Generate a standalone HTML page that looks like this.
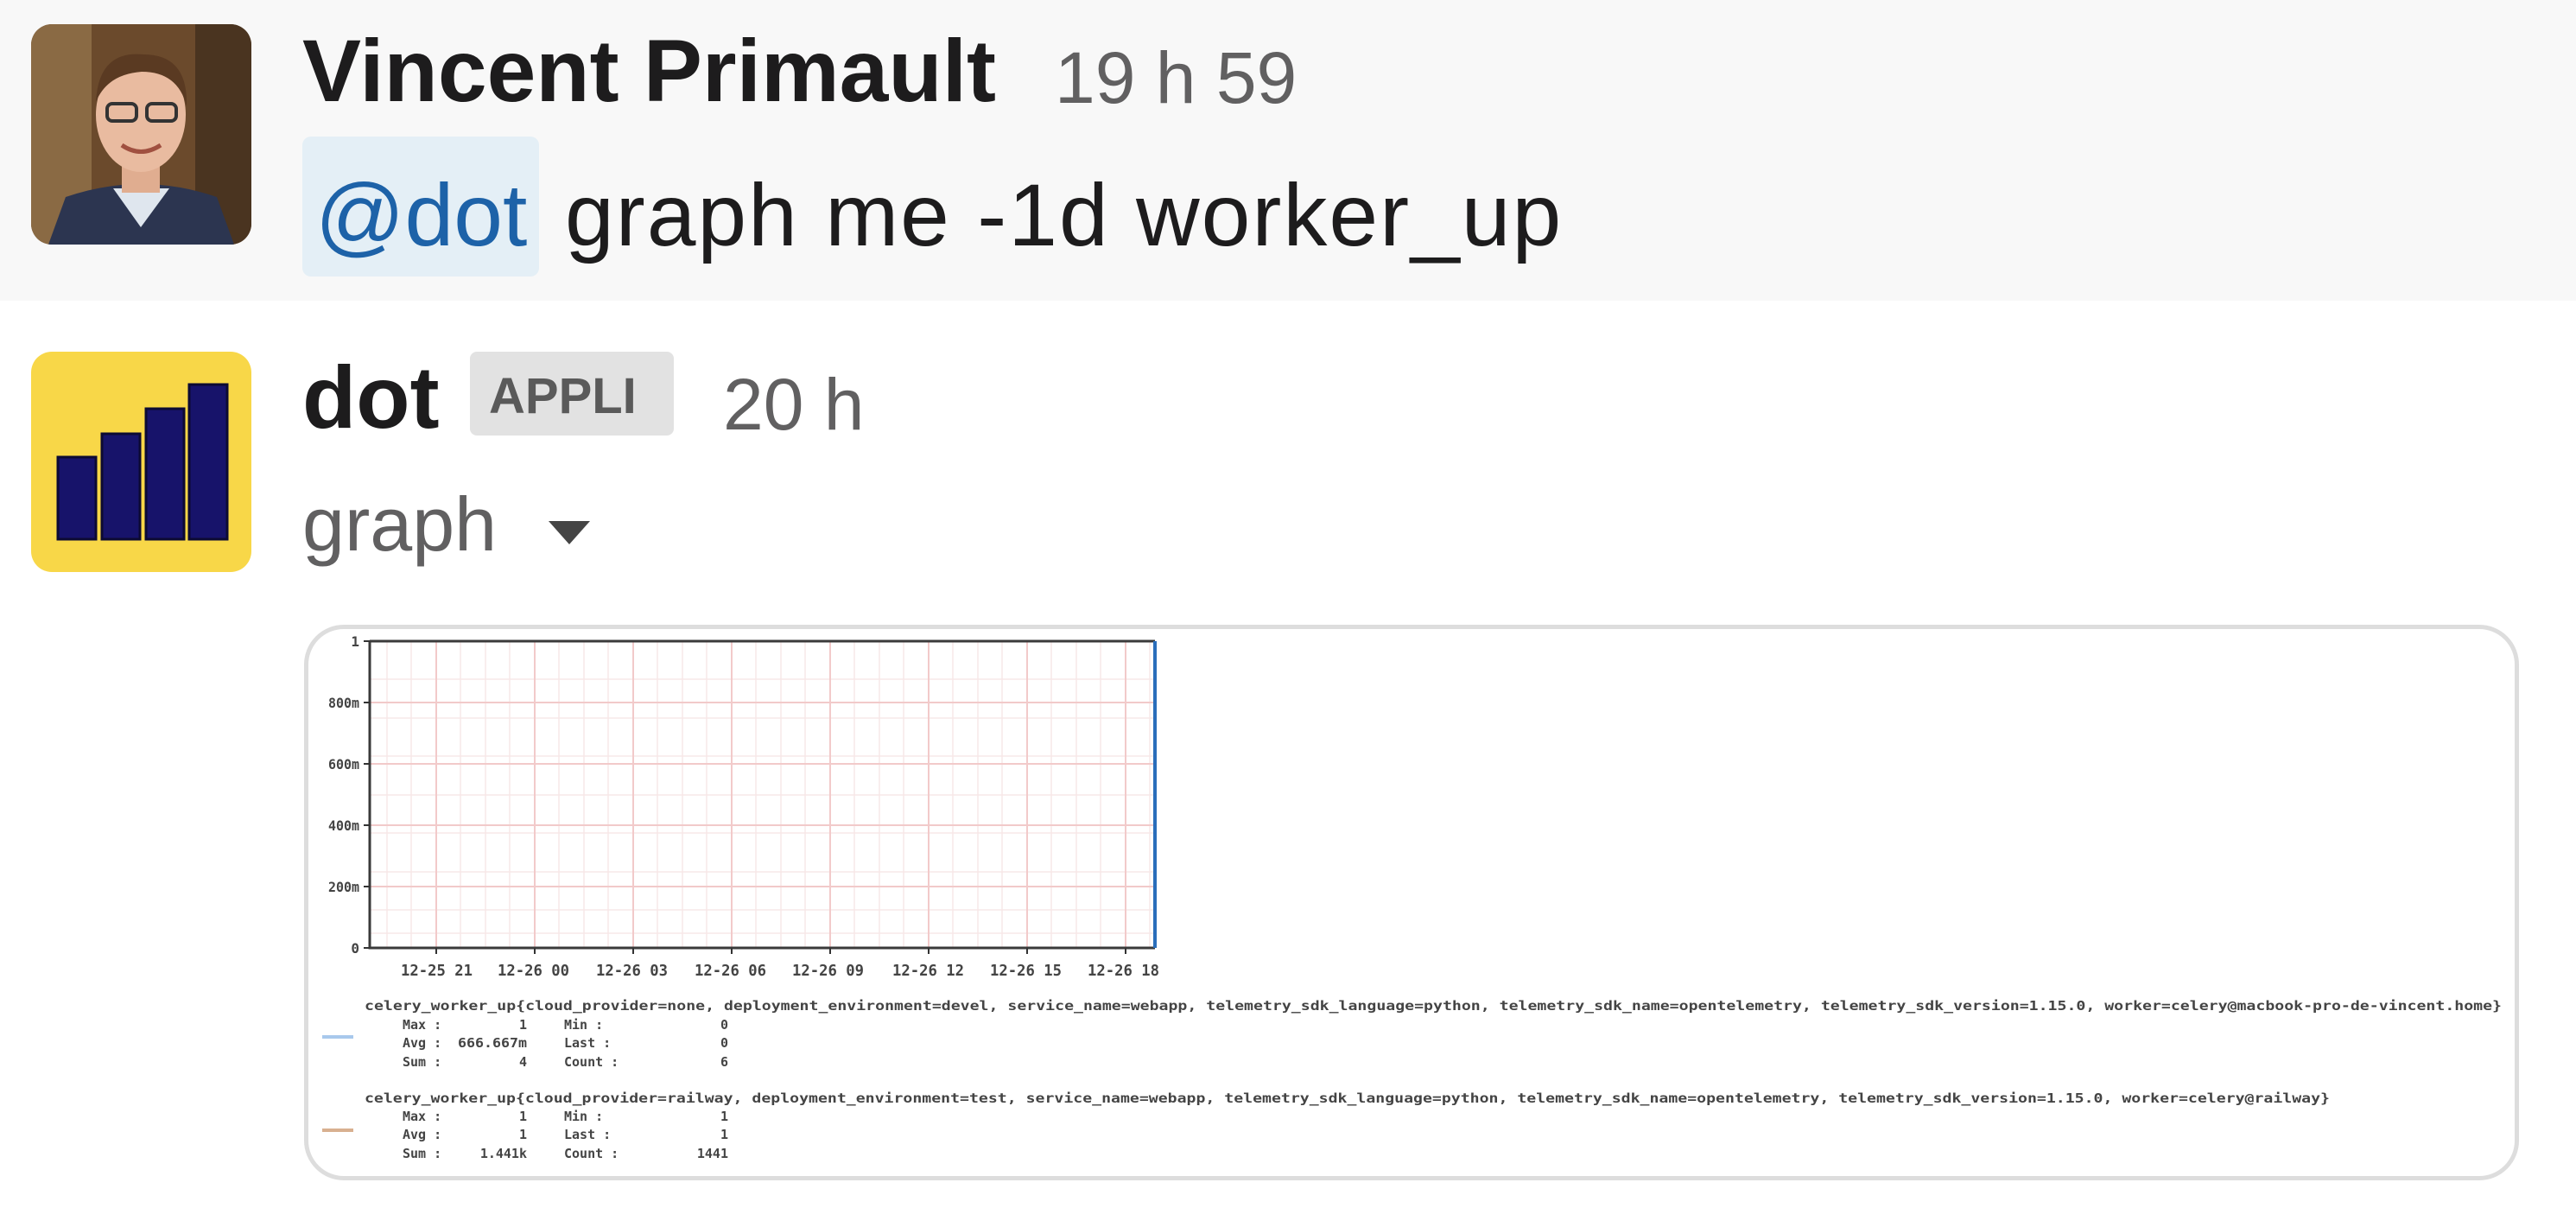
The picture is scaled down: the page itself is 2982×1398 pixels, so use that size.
<!DOCTYPE html>
<html><head><meta charset="utf-8"><style>
html,body{margin:0;padding:0;width:2982px;height:1398px;background:#fff;overflow:hidden;font-family:"Liberation Sans",sans-serif}
.band{position:absolute;left:0;top:0;width:2982px;height:348px;background:#f8f8f8}
.t{position:absolute;white-space:nowrap;line-height:1}
</style></head><body>
<div class="band"></div>

<svg style="position:absolute;left:36px;top:28px" width="255" height="255" viewBox="0 0 255 255">
<defs><clipPath id="c1"><rect width="255" height="255" rx="24"/></clipPath></defs>
<g clip-path="url(#c1)">
<rect width="255" height="255" fill="#6b4a2c"/>
<rect x="0" y="0" width="70" height="255" fill="#8a6a44"/>
<rect x="190" y="0" width="65" height="255" fill="#4a3420"/>
<path d="M20 255 L40 200 Q127 170 215 200 L235 255Z" fill="#2c3550"/>
<path d="M95 190 L127 235 L160 190 Z" fill="#dfe6ee"/>
<rect x="105" y="150" width="44" height="45" fill="#e0ad90"/>
<ellipse cx="127" cy="105" rx="52" ry="66" fill="#e9bba0"/>
<path d="M75 90 Q78 30 130 35 Q182 35 180 95 Q170 55 128 55 Q88 58 75 90Z" fill="#5a3a22"/>
<rect x="88" y="92" width="34" height="20" rx="6" fill="none" stroke="#333" stroke-width="4"/>
<rect x="134" y="92" width="34" height="20" rx="6" fill="none" stroke="#333" stroke-width="4"/>
<path d="M105 140 Q127 155 150 140" stroke="#a05040" stroke-width="5" fill="none"/>
</g></svg>

<div class="t" style="left:350px;top:31px;font-size:102px;font-weight:bold;color:#1d1c1d">Vincent Primault</div>
<div class="t" style="left:1221px;top:48px;font-size:84px;color:#616061">19 h 59</div>
<div style="position:absolute;left:350px;top:158px;width:274px;height:162px;background:#e4eff6;border-radius:10px"></div>
<div class="t" style="left:365px;top:198px;font-size:102px;color:#1d62a8">@dot</div>
<div class="t" style="left:654px;top:198px;font-size:102px;color:#1d1c1d;letter-spacing:2px">graph me -1d worker_up</div>

<svg style="position:absolute;left:36px;top:407px" width="255" height="255" viewBox="0 0 255 255">
<rect width="255" height="255" rx="24" fill="#f8d748"/>
<g fill="#17136a" stroke="#0c0a33" stroke-width="3">
<rect x="31" y="122" width="44" height="95"/>
<rect x="82" y="95" width="44" height="122"/>
<rect x="133" y="66" width="44" height="151"/>
<rect x="183" y="38" width="44" height="179"/>
</g></svg>

<div class="t" style="left:350px;top:409px;font-size:102px;font-weight:bold;color:#1d1c1d">dot</div>
<div style="position:absolute;left:544px;top:407px;width:236px;height:97px;background:#e2e2e2;border-radius:8px"></div>
<div class="t" style="left:566px;top:430px;font-size:58px;font-weight:bold;color:#5a5a5a">APPLI</div>
<div class="t" style="left:837px;top:426px;font-size:84px;color:#616061">20 h</div>
<div class="t" style="left:350px;top:563px;font-size:88px;color:#616061">graph</div>
<svg style="position:absolute;left:633px;top:600px" width="52" height="32"><path d="M2 3 L50 3 L26 30Z" fill="#454545"/></svg>

<div style="position:absolute;left:352px;top:723px;width:2554px;height:633px;border:5px solid #dddddd;border-radius:46px;background:#fff"></div>

<svg style="position:absolute;left:0;top:0" width="2982" height="1398" font-family="DejaVu Sans Mono, Liberation Mono, monospace" font-weight="bold">
<g stroke="#f7e8e8" stroke-width="1.5">
<path d="M428 786H1337M428 831H1337M428 875H1337M428 920H1337M428 964H1337M428 1009H1337M428 1053H1337M428 1080H1337"/>
<path d="M448 742V1097M476 742V1097M533 742V1097M562 742V1097M590 742V1097M647 742V1097M676 742V1097M704 742V1097M761 742V1097M790 742V1097M818 742V1097M875 742V1097M904 742V1097M932 742V1097M989 742V1097M1018 742V1097M1046 742V1097M1103 742V1097M1132 742V1097M1160 742V1097M1217 742V1097M1246 742V1097M1274 742V1097M1331 742V1097"/>
</g>
<g stroke="#f2caca" stroke-width="2">
<path d="M428 813H1337M428 884H1337M428 955H1337M428 1026H1337"/>
<path d="M505 742V1097M619 742V1097M733 742V1097M847 742V1097M961 742V1097M1075 742V1097M1189 742V1097M1303 742V1097"/>
</g>
<path d="M428 742H1337M428 742V1097H1337" stroke="#3a3a3a" stroke-width="3" fill="none"/>
<path d="M1337 742V1097" stroke="#2a6ebb" stroke-width="4"/>
<g stroke="#333" stroke-width="2"><path d="M421 742H428M421 813H428M421 884H428M421 955H428M421 1026H428M421 1097H428M505 1097V1104M619 1097V1104M733 1097V1104M847 1097V1104M961 1097V1104M1075 1097V1104M1189 1097V1104M1303 1097V1104"/></g>
<g font-size="16" fill="#444" text-anchor="end">
<text x="416" y="748">1</text>
<text x="416" y="819" textLength="36" lengthAdjust="spacingAndGlyphs">800m</text>
<text x="416" y="890" textLength="36" lengthAdjust="spacingAndGlyphs">600m</text>
<text x="416" y="961" textLength="36" lengthAdjust="spacingAndGlyphs">400m</text>
<text x="416" y="1032" textLength="36" lengthAdjust="spacingAndGlyphs">200m</text>
<text x="416" y="1103">0</text>
</g>
<g font-size="18" fill="#444">
<text x="464" y="1129" textLength="83" lengthAdjust="spacingAndGlyphs">12-25 21</text>
<text x="576" y="1129" textLength="83" lengthAdjust="spacingAndGlyphs">12-26 00</text>
<text x="690" y="1129" textLength="83" lengthAdjust="spacingAndGlyphs">12-26 03</text>
<text x="804" y="1129" textLength="83" lengthAdjust="spacingAndGlyphs">12-26 06</text>
<text x="917" y="1129" textLength="83" lengthAdjust="spacingAndGlyphs">12-26 09</text>
<text x="1033" y="1129" textLength="83" lengthAdjust="spacingAndGlyphs">12-26 12</text>
<text x="1146" y="1129" textLength="83" lengthAdjust="spacingAndGlyphs">12-26 15</text>
<text x="1259" y="1129" textLength="83" lengthAdjust="spacingAndGlyphs">12-26 18</text>
</g>
<rect x="373" y="1198" width="36" height="4" fill="#a8c8ec"/>
<rect x="373" y="1306" width="36" height="4" fill="#d8b090"/>
<g font-size="15" fill="#444">
<text x="422" y="1169" textLength="2474" lengthAdjust="spacingAndGlyphs">celery_worker_up{cloud_provider=none, deployment_environment=devel, service_name=webapp, telemetry_sdk_language=python, telemetry_sdk_name=opentelemetry, telemetry_sdk_version=1.15.0, worker=celery@macbook-pro-de-vincent.home}</text>
<text x="466" y="1191">Max :</text><text x="610" y="1191" text-anchor="end">1</text><text x="653" y="1191">Min  :</text><text x="843" y="1191" text-anchor="end">0</text>
<text x="466" y="1212">Avg :</text><text x="610" y="1212" text-anchor="end" textLength="80" lengthAdjust="spacingAndGlyphs">666.667m</text><text x="653" y="1212">Last :</text><text x="843" y="1212" text-anchor="end">0</text>
<text x="466" y="1234">Sum :</text><text x="610" y="1234" text-anchor="end">4</text><text x="653" y="1234">Count :</text><text x="843" y="1234" text-anchor="end">6</text>
<text x="422" y="1276" textLength="2275" lengthAdjust="spacingAndGlyphs">celery_worker_up{cloud_provider=railway, deployment_environment=test, service_name=webapp, telemetry_sdk_language=python, telemetry_sdk_name=opentelemetry, telemetry_sdk_version=1.15.0, worker=celery@railway}</text>
<text x="466" y="1297">Max :</text><text x="610" y="1297" text-anchor="end">1</text><text x="653" y="1297">Min  :</text><text x="843" y="1297" text-anchor="end">1</text>
<text x="466" y="1318">Avg :</text><text x="610" y="1318" text-anchor="end">1</text><text x="653" y="1318">Last :</text><text x="843" y="1318" text-anchor="end">1</text>
<text x="466" y="1340">Sum :</text><text x="610" y="1340" text-anchor="end">1.441k</text><text x="653" y="1340">Count :</text><text x="843" y="1340" text-anchor="end">1441</text>
</g>
</svg>
</body></html>
